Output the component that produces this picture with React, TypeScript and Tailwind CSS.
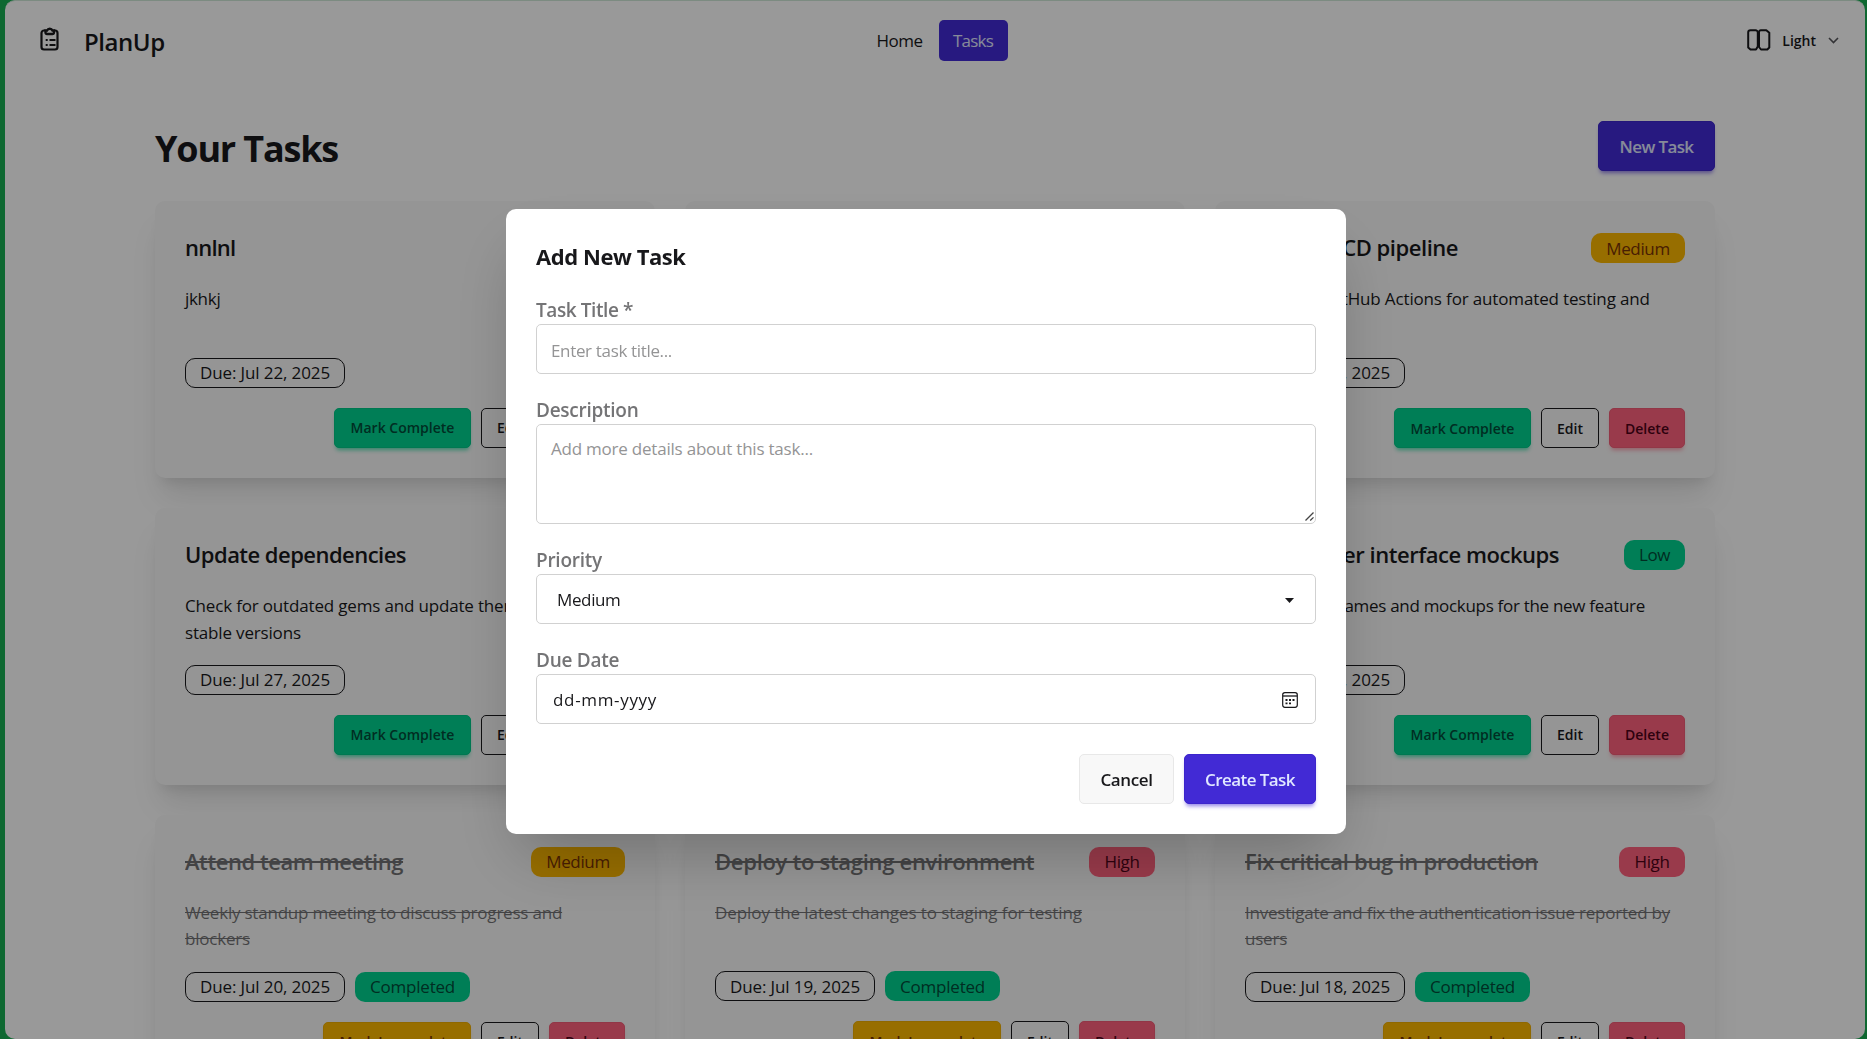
type Priority = "Low" | "Medium" | "High";

interface Task {
  title: string;
  titleTracking: string;
  lines: string[];
  textTracking: string;
  due: string;
  priority: Priority;
  done?: boolean;
}

const tasks: Task[] = [
  { title: "nnlnl", titleTracking: "tracking-[-0.74px]", lines: ["jkhkj"], textTracking: "tracking-[-0.3px]", due: "Jul 22, 2025", priority: "Medium" },
  { title: "Write documentation", titleTracking: "tracking-[-0.5px]", lines: ["Document the API endpoints and usage"], textTracking: "tracking-[-0.2px]", due: "Jul 24, 2025", priority: "Low" },
  { title: "Set up CI/CD pipeline", titleTracking: "tracking-[-0.46px]", lines: ["Configure GitHub Actions for automated testing and", "deployment"], textTracking: "tracking-[-0.15px]", due: "Jul 25, 2025", priority: "Medium" },
  { title: "Update dependencies", titleTracking: "tracking-[-0.53px]", lines: ["Check for outdated gems and update them to latest", "stable versions"], textTracking: "tracking-[-0.17px]", due: "Jul 27, 2025", priority: "Low" },
  { title: "Review pull requests", titleTracking: "tracking-[-0.5px]", lines: ["Review the pending pull requests"], textTracking: "tracking-[-0.2px]", due: "Jul 23, 2025", priority: "High" },
  { title: "Design user interface mockups", titleTracking: "tracking-[-0.46px]", lines: ["Create wireframes and mockups for the new feature"], textTracking: "tracking-[-0.3px]", due: "Jul 26, 2025", priority: "Low" },
  { title: "Attend team meeting", titleTracking: "tracking-[-0.43px]", lines: ["Weekly standup meeting to discuss progress and", "blockers"], textTracking: "tracking-[-0.21px]", due: "Jul 20, 2025", priority: "Medium", done: true },
  { title: "Deploy to staging environment", titleTracking: "tracking-[-0.29px]", lines: ["Deploy the latest changes to staging for testing"], textTracking: "tracking-[-0.08px]", due: "Jul 19, 2025", priority: "High", done: true },
  { title: "Fix critical bug in production", titleTracking: "tracking-[-0.28px]", lines: ["Investigate and fix the authentication issue reported by", "users"], textTracking: "tracking-[-0.21px]", due: "Jul 18, 2025", priority: "High", done: true },
];

const priorityStyle: Record<Priority, string> = {
  Low: "w-[61px] bg-[#00d390] text-[#004c39]",
  Medium: "w-[94px] bg-[#fcb700] text-[#793205]",
  High: "w-[66px] bg-[#ff627d] text-[#4d0218]",
};

const badge = "flex h-[30px] shrink-0 items-center justify-center rounded-[10px] text-[17px]";
const smallButton = "flex h-10 items-center justify-center rounded-[5px] text-[14px] font-semibold";

function TaskCard({ task }: { task: Task }) {
  const faded = task.done ? "line-through opacity-60" : "";
  return (
    <article className="flex h-[276.7px] flex-col rounded-[10px] bg-[#f8f8f8] p-[30px] shadow-[0_25px_31px_-6px_rgb(0_0_0/0.1),0_10px_12.5px_-7.5px_rgb(0_0_0/0.1)]">
      <div className="mt-[2px] flex h-[30px] items-center justify-between">
        <h2 className={`pb-px text-[22px] font-semibold ${task.titleTracking} ${faded}`}>{task.title}</h2>
        <span className={`${badge} tracking-[-0.35px] ${priorityStyle[task.priority]}`}>{task.priority}</span>
      </div>
      <p className={`mt-[23px] h-[53px] text-[17px] leading-[26.7px] ${task.textTracking} ${faded}`}>
        {task.lines.map((line) => (
          <span key={line} className="block whitespace-nowrap">{line}</span>
        ))}
      </p>
      <div className="mt-[18.9px] flex gap-[10px]">
        <span className={`${badge} w-[160px] border border-[#18181b] tracking-[-0.12px]`}>Due: {task.due}</span>
        {task.done && <span className={`${badge} w-[115px] bg-[#00d390] tracking-[-0.21px] text-[#004c39]`}>Completed</span>}
      </div>
      <div className="mt-5 flex justify-end gap-[10px]">
        {task.done ? (
          <button className={`${smallButton} w-[148px] border border-[#efae00] bg-[#fcb700] text-[#793205] shadow-[0_4px_4px_-2px_#fcb70088]`}>Mark Incomplete</button>
        ) : (
          <button className={`${smallButton} w-[137px] border border-[#00c888] bg-[#00d390] text-[#004c39] shadow-[0_4px_4px_-2px_#00d390aa]`}>Mark Complete</button>
        )}
        <button className={`${smallButton} w-[58px] border border-[#18181b]`}>Edit</button>
        <button className={`${smallButton} w-[76px] border border-[#f25d77] bg-[#ff627d] text-[#4d0218] shadow-[0_4px_4px_-2px_#ff627d99]`}>Delete</button>
      </div>
    </article>
  );
}

function ClipboardIcon() {
  return (
    <svg className="mr-px mb-[2px] h-[24px] w-[19px]" viewBox="0 0 19 24" fill="none" stroke="#18181b" strokeWidth="2.2">
      <path d="M5.5 3.5H4A2.5 2.5 0 0 0 1.500 6v14A2.500 2.500 0 0 0 4 22.500h11a2.500 2.500 0 0 0 2.500-2.500V6A2.500 2.500 0 0 0 15 3.500h-1.500" />
      <path d="M5.500 5.500V3.500H7a3 3 0 0 1 5.500 0H14v2a1.500 1.500 0 0 1-1.500 1.500h-5.500A1.500 1.500 0 0 1 5.500 5.500Z" strokeWidth="2.400" />
      <path d="M5.700 13h2M9.500 13h6M5.700 18h2M9.500 18h6" strokeWidth="2.100" />
    </svg>
  );
}

function ColumnsIcon() {
  return (
    <svg className="h-[22px] w-[24px]" viewBox="0 0 24 22" fill="none" stroke="#18181b" strokeWidth="2">
      <path d="M3.500 1.200h5a2.300 2.300 0 0 1 2.300 2.300v14l-1.800 3H3.500L1.200 18.500V3.500a2.300 2.300 0 0 1 2.300-2.300Z" strokeLinejoin="round" />
      <path d="M14 1.200h5.300l3 2.500v14.800l-2 2h-6.300L12 18V3a1.800 1.800 0 0 1 2-1.800Z" strokeLinejoin="round" />
    </svg>
  );
}

function CalendarIcon() {
  return (
    <svg className="h-4 w-4" viewBox="0 0 16 16" fill="none" stroke="#18181b">
      <rect x="0.700" y="0.700" width="14.600" height="14.600" rx="2.200" strokeWidth="1.200" />
      <path d="M1 4h14" strokeWidth="1.300" />
      <path d="M3.500 8h2M7 8h2M10.500 8h2M3.500 11.400h2M7 11.400h2" strokeWidth="1.900" />
    </svg>
  );
}

const field = "flex w-full items-center rounded-[5px] border border-[#d1d1d1] bg-white text-[17px]";
const label = "flex h-[30px] items-center pt-[2px] text-[19px] font-semibold text-[#747476]";

function NewTaskModal() {
  return (
    <div className="fixed inset-0 z-10 flex justify-center bg-black/40 pr-[15px]">
      <form className="mt-[209px] flex h-[625px] w-[840px] flex-col rounded-[10px] bg-white px-[30px] pt-[30px] shadow-[0_31px_62px_-15px_rgb(0_0_0/0.25)]">
        <h3 className="flex h-9 items-center pb-[2px] text-[22px] font-bold tracking-[-0.44px]">Add New Task</h3>
        <div className="mt-[19px]">
          <div className={`${label} tracking-[-0.41px]`}>Task Title *</div>
          <div className={`${field} h-[50px] pt-[3px] pr-[15px] pl-[14px] tracking-[-0.34px] text-[#949495]`}>Enter task title...</div>
        </div>
        <div className="mt-5">
          <div className={`${label} tracking-[-0.26px]`}>Description</div>
          <div className={`${field} relative h-[100px] items-start pt-[11px] pr-[15px] pl-[14px] tracking-[-0.22px] text-[#949495]`}>
            Add more details about this task...
            <svg className="absolute right-[1px] bottom-[2px] h-[9px] w-[9px]" viewBox="0 0 9 9" stroke="#444" strokeWidth="1.300">
              <path d="M0.500 8.500 8.500 0.500M5.200 8.500 8.500 5.400" />
            </svg>
          </div>
        </div>
        <div className="mt-5">
          <div className={`${label} tracking-[-0.26px]`}>Priority</div>
          <div className={`${field} h-[50px] justify-between pt-[2px] pr-[21px] pl-5 tracking-[-0.37px]`}>
            Medium
            <svg className="h-[5px] w-[9px]" viewBox="0 0 9 5"><path d="M0 0h9L4.500 5Z" fill="#18181b" /></svg>
          </div>
        </div>
        <div className="mt-5">
          <div className={`${label} tracking-[-0.26px]`}>Due Date</div>
          <div className={`${field} h-[50px] justify-between pt-[1px] pr-[17px] pl-4 tracking-[0.67px]`}>
            <span className="pt-px">dd-mm-yyyy</span>
            <CalendarIcon />
          </div>
        </div>
        <div className="mt-[30px] flex justify-end gap-[10px]">
          <button type="button" className="h-[50px] w-[95px] rounded-[5px] border border-[#e8e8e8] bg-[#f8f8f8] pt-[2px] text-[17px] font-semibold tracking-[-0.4px]">Cancel</button>
          <button type="button" className="h-[50px] w-[132px] rounded-[5px] border border-[#3c25cc] bg-[#422ad5] pt-[2px] text-[17px] font-semibold tracking-[-0.56px] text-[#e0e7ff] shadow-[0_4px_4px_-2px_#422ad599]">Create Task</button>
        </div>
      </form>
    </div>
  );
}

export default function App() {
  return (
    <div className="h-[1039px] overflow-hidden bg-[#18ad52] pr-[2px] pl-[5px] font-['Open_Sans','Noto_Sans',sans-serif] text-[#18181b]">
      <div className="h-[1039px] overflow-hidden rounded-[10px] border-t border-[#cfe8d8] bg-white">
        <header className="grid h-[78px] grid-cols-3 items-center pr-[26px] pl-[35px]">
          <div className="flex items-center gap-6">
            <ClipboardIcon />
            <span className="pt-[3px] text-[24px] font-semibold tracking-[-0.45px]">PlanUp</span>
          </div>
          <nav className="flex items-center justify-center gap-4 pl-[5px] text-[17px]">
            <span className="pt-[2px] tracking-[-0.51px]">Home</span>
            <span className="flex h-[41px] w-[69px] items-center justify-center rounded-[5px] bg-[#422ad5] pt-[2px] tracking-[-0.79px] text-[#e0e7ff]">Tasks</span>
          </nav>
          <div className="flex items-center justify-end">
            <ColumnsIcon />
            <span className="ml-[11px] text-[14px] font-semibold">Light</span>
            <svg className="ml-3 h-[7px] w-[11px]" viewBox="0 0 11 7" fill="none" stroke="#55555a" strokeWidth="1.600"><path d="M1 1l4.500 4.500L10 1" /></svg>
          </div>
        </header>
        <main className="mx-[150px]">
          <div className="mt-[42px] flex h-[50px] items-center justify-between">
            <h1 className="pt-[5px] text-[36px] font-bold tracking-[-1.180px]">Your Tasks</h1>
            <button className="h-[50px] w-[117px] rounded-[5px] border border-[#3c25cc] bg-[#422ad5] pt-[2px] text-[17px] font-semibold tracking-[-0.61px] text-[#e0e7ff] shadow-[0_4px_4px_-2px_#422ad599]">New Task</button>
          </div>
          <section className="mt-[30.300px] grid w-[1560px] grid-cols-[500px_500px_500px] gap-[30px]">
            {tasks.map((task) => (
              <TaskCard key={task.title} task={task} />
            ))}
          </section>
        </main>
      </div>
      <NewTaskModal />
    </div>
  );
}
